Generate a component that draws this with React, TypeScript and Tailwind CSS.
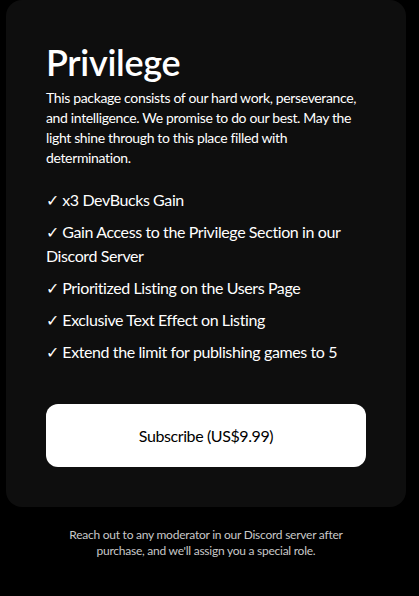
export default function App() {
  const perks = [
    "x3 DevBucks Gain",
    "Gain Access to the Privilege Section in our Discord Server",
    "Prioritized Listing on the Users Page",
    "Exclusive Text Effect on Listing",
    "Extend the limit for publishing games to 5",
  ];

  return (
    <div
      className="min-h-[596px] w-full bg-black text-white"
      style={{ fontFamily: "Lato, 'Noto Sans', sans-serif" }}
    >
      <div className="ml-[6px] w-[400px] rounded-2xl bg-[#0e0e0e] p-10">
        <h1 className="text-4xl leading-[44px] font-semibold tracking-[-0.3px]">Privilege</h1>
        <p className="mt-1 text-sm leading-5 tracking-[-0.35px]">
          This package consists of our hard work, perseverance, and intelligence. We promise to do our best. May the
          light shine through to this place filled with determination.
        </p>
        <ul className="mt-5 flex flex-col gap-2">
          {perks.map((perk) => (
            <li key={perk} className="text-base leading-6 tracking-[-0.4px]">
              {`✓ ${perk}`}
            </li>
          ))}
        </ul>
        <button className="mt-10 h-[63px] w-full rounded-xl bg-white text-base tracking-[-0.4px] text-black">
          Subscribe (US$9.99)
        </button>
      </div>
      <p className="ml-[6px] mt-5 w-[400px] px-14 text-center text-xs leading-4 tracking-[-0.25px] text-[#c8c8c8]">
        Reach out to any moderator in our Discord server after purchase, and we'll assign you a special role.
      </p>
    </div>
  );
}
